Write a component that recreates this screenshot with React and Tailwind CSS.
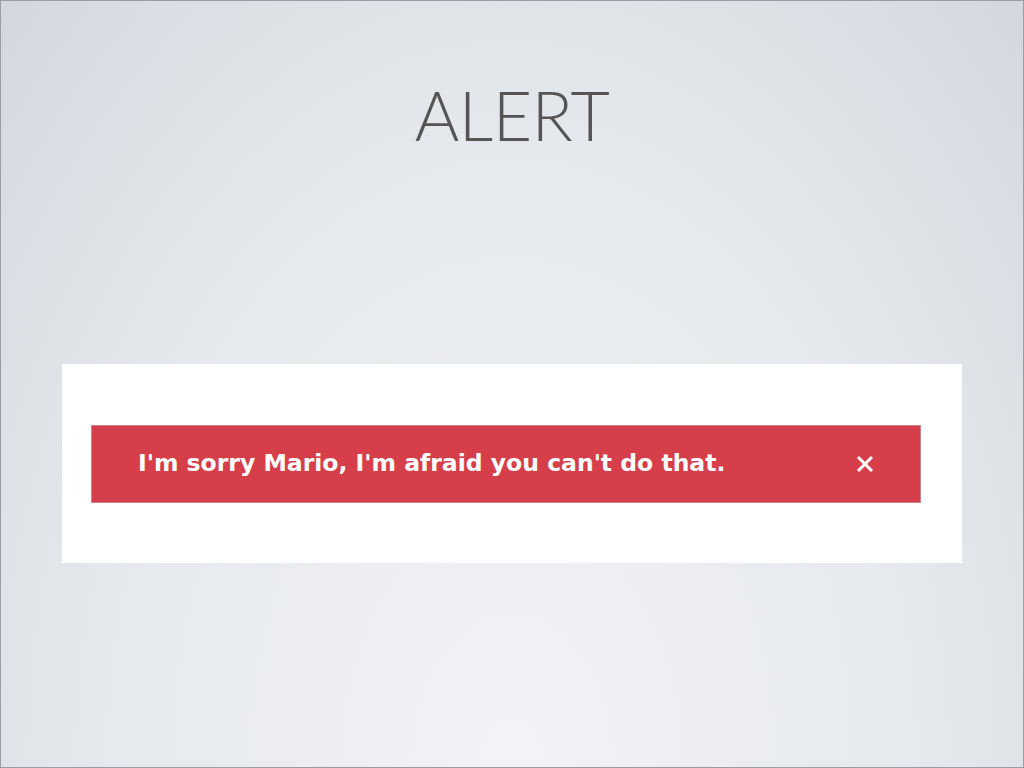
export default function App() {
  return (
    <div className="w-[1024px] h-[768px] border border-[#9a9da3] bg-[radial-gradient(ellipse_at_50%_100%,#f2f3f6_0%,#e6e9ed_55%,#d4d8de_100%)] flex flex-col items-center overflow-hidden">
      <h1
        className="mt-[80px] text-[68px] leading-none font-light text-[#555555] tracking-[-0.5px]"
        style={{ fontFamily: 'Lato, "Open Sans", sans-serif' }}
      >
        ALERT
      </h1>
      <div className="mt-[215px] w-[900px] h-[199px] bg-white pt-[61px] pl-[29px] pr-[41px] self-start ml-[61px]">
        <div className="h-[78px] bg-[#d63f49] border border-[#c9858a] flex items-center justify-between pl-[46px] pr-[46px]">
          <span
            className="text-white text-[23.5px] font-bold leading-none"
            style={{ fontFamily: '"DejaVu Sans", Verdana, sans-serif' }}
          >
            I'm sorry Mario, I'm afraid you can't do that.
          </span>
          <svg width="18" height="18" viewBox="0 0 18 18">
            <path d="M2 2 L16 16 M16 2 L2 16" stroke="white" strokeWidth="3" strokeLinecap="butt" />
          </svg>
        </div>
      </div>
    </div>
  );
}
